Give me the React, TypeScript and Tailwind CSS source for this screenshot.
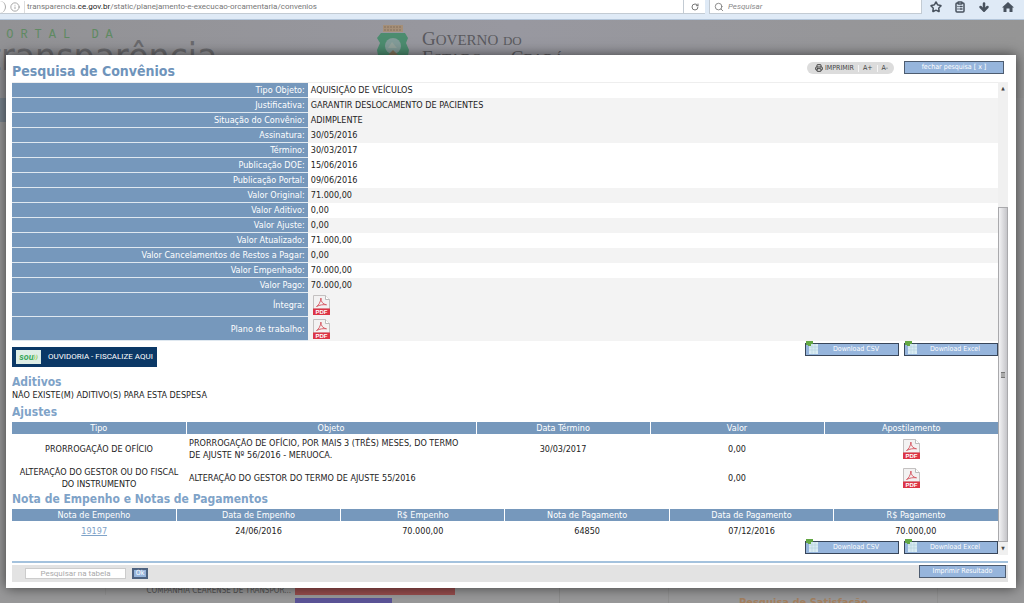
import { ArrowDown, ClipboardList, Info, Printer, RotateCw, Search, Star } from "lucide-react";

const details = [
  { label: "Tipo Objeto:", value: "AQUISIÇÃO DE VEÍCULOS", shaded: false },
  { label: "Justificativa:", value: "GARANTIR DESLOCAMENTO DE PACIENTES", shaded: true },
  { label: "Situação do Convênio:", value: "ADIMPLENTE", shaded: true },
  { label: "Assinatura:", value: "30/05/2016", shaded: true },
  { label: "Término:", value: "30/03/2017", shaded: false },
  { label: "Publicação DOE:", value: "15/06/2016", shaded: false },
  { label: "Publicação Portal:", value: "09/06/2016", shaded: false },
  { label: "Valor Original:", value: "71.000,00", shaded: true },
  { label: "Valor Aditivo:", value: "0,00", shaded: false },
  { label: "Valor Ajuste:", value: "0,00", shaded: true },
  { label: "Valor Atualizado:", value: "71.000,00", shaded: false },
  { label: "Valor Cancelamentos de Restos a Pagar:", value: "0,00", shaded: true },
  { label: "Valor Empenhado:", value: "70.000,00", shaded: false },
  { label: "Valor Pago:", value: "70.000,00", shaded: true },
];

const documents = ["Íntegra:", "Plano de trabalho:"];

const ajustes = [
  {
    tipo: "PRORROGAÇÃO DE OFÍCIO",
    objeto: "PRORROGAÇÃO DE OFÍCIO, POR MAIS 3 (TRÊS) MESES, DO TERMO DE AJUSTE Nº 56/2016 - MERUOCA.",
    termino: "30/03/2017",
    valor: "0,00",
  },
  {
    tipo: "ALTERAÇÃO DO GESTOR OU DO FISCAL DO INSTRUMENTO",
    objeto: "ALTERAÇÃO DO GESTOR DO TERMO DE AJUSTE 55/2016",
    termino: "",
    valor: "0,00",
  },
];

const notaColumns = [
  "Nota de Empenho",
  "Data de Empenho",
  "R$ Empenho",
  "Nota de Pagamento",
  "Data de Pagamento",
  "R$ Pagamento",
];

function PdfLink({ name }: { name: string }) {
  return (
    <a href="#" aria-label={name} className="inline-block align-middle">
      <svg viewBox="0 0 17 20" className="block h-5 w-[17px]">
        <path d="M.5.5h12l4 4V14H.5z" fill="#f3f2f2" stroke="#c4c1c1" />
        <path d="M12.5.5v4h4" fill="#fff" stroke="#bbb" />
        <path
          d="M3.500 11.500c2-1 4.200-4.500 4.400-8.500.1 4 2 6.200 5.600 6.800-3.500-.4-6.500 0-10 1.700z"
          fill="none"
          stroke="#d8606a"
          strokeWidth="1"
        />
        <path d="M0 13.500h17V20H0z" fill="#dc3545" />
        <text x="8.500" y="19" textAnchor="middle" fontSize="6" fontWeight="bold" fill="#fff" fontFamily="Liberation Sans">
          PDF
        </text>
      </svg>
    </a>
  );
}

function DownloadButton({ children }: { children: string }) {
  return (
    <button className="flex h-[13px] w-[94px] items-center border border-[#38465a] bg-[#96b5dc] text-[7px] leading-none text-white">
      <svg viewBox="0 0 12 13" className="-mt-1 h-[13px] w-3 shrink-0">
        <path d="M3 3h9v10H3z" fill="#d9ebf3" />
        <path d="M3 6h9M3 9h9M6 3v10M9 3v10" stroke="#b4d0de" strokeWidth=".6" />
        <path d="M0 0h7v3H5v2H2V4H0z" fill="#63a744" />
      </svg>
      <span className="flex-1 pr-1 text-center">{children}</span>
    </button>
  );
}

function Downloads() {
  return (
    <div className="flex justify-end gap-[5px]">
      <DownloadButton>Download CSV</DownloadButton>
      <DownloadButton>Download Excel</DownloadButton>
    </div>
  );
}

function BrowserBar() {
  return (
    <div className="flex h-5 items-start border-b border-[#b4c6da] bg-[#dfeaf6] font-['Roboto',sans-serif] text-[8px] text-[#777]">
      <div className="flex h-3.5 flex-1 items-center border-b border-[#c3cbd3] bg-white">
        <span className="h-3 w-1.5 rounded-r-full border-r border-[#aaa]" />
        <Info className="mx-1 h-2.5 w-2.5 text-[#999]" />
        <span className="border-l border-[#ddd] pl-0.5">
          transparencia.<span className="text-[#222]">ce.gov.br</span>
          /static/planejamento-e-execucao-orcamentaria/convenios
        </span>
      </div>
      <button
        aria-label="Recarregar"
        className="flex h-3.5 w-[22px] items-center justify-center border-b border-l border-[#c3cbd3] bg-white"
      >
        <RotateCw className="h-2 w-2" strokeWidth={3} />
      </button>
      <label className="ml-1 flex h-3.5 w-[213px] items-center border-x border-b border-[#c3cbd3] bg-white pl-1">
        <Search className="h-2.5 w-2.5 shrink-0" />
        <input
          aria-label="Pesquisar"
          placeholder="Pesquisar"
          className="w-full min-w-0 pl-1 italic outline-none placeholder:text-[#888]"
        />
      </label>
      <div className="flex h-3.5 w-[102px] items-center gap-3 pl-2 text-[#48525e]">
        <Star className="h-3 w-3 shrink-0" strokeWidth={3} />
        <ClipboardList className="h-3 w-3 shrink-0" strokeWidth={3} />
        <ArrowDown className="h-3 w-3 shrink-0" strokeWidth={5} />
        <svg viewBox="0 0 12 12" className="h-3 w-3 shrink-0" fill="currentColor">
          <path d="M6 1l6 5.500h-1.500V11h-3V7.500h-3V11h-3V6.500H0z" />
        </svg>
      </div>
    </div>
  );
}

function Portal() {
  return (
    <div className="flex flex-1 flex-col overflow-hidden bg-[#989899]">
      <div className="flex h-[78px] items-start bg-gradient-to-r from-[#929295] via-[#9898a0] to-[#959595]">
        <div className="w-[376px] whitespace-nowrap pt-2">
          <p className="-ml-2 font-['Liberation_Mono'] text-[12px] leading-[14px] tracking-[7px] text-[#5f8a62]">
            PORTAL DA
          </p>
          <p className="-ml-3 text-[37px] leading-8 text-[#6a6a6d]">transparência</p>
        </div>
        <svg viewBox="0 0 34 42" className="mt-1 h-[42px] w-[34px]">
          <path d="M7 1h20v7H7z" fill="#a58f78" />
          <path d="M8 3h18M8 6h18" stroke="#84715e" strokeDasharray="2 1" />
          <path d="M5 9h24l3 5-2 5 3 7-3 16H4L1 26l3-7-3-5z" fill="#4c8c6f" />
          <circle cx="17" cy="22" r="8" fill="#829b98" />
          <path d="M9 40l4-10 4-4 5 5 3 9z" fill="#82735a" />
          <path d="M12 24l4-6 5 6z" fill="#93a39c" />
        </svg>
        <p className="ml-3 pt-2.5 font-['Liberation_Serif'] text-[19px] leading-[17px] text-[#5a5a5e]">
          G<span className="text-[15px]">OVERNO</span> <span className="text-[13px]">DO</span>
          <br />E<span className="text-[15px]">STADO</span> <span className="text-[13px]">DO</span> C
          <span className="text-[15px]">EARÁ</span>
        </p>
      </div>
      <div className="h-6 w-4 bg-[#78838e]" />
      <div className="mt-auto flex h-[17px] items-start text-[8px] leading-[9px]">
        <div className="ml-[105px] w-[190px] border-l border-[#909090] pr-1 text-right text-[#555]">
          COMPANHIA CEARENSE DE TRANSPOR...
        </div>
        <div className="flex w-[265px] flex-col gap-[3px] border-r border-[#8c8c8c]">
          <div className="h-[9px] w-[160px] bg-[#984d4d]" />
          <div className="h-1.5 w-[97px] bg-[#5b5396]" />
        </div>
        <p className="ml-[108px] w-[270px] border-x border-[#909090] pl-[70px] pt-3 text-[11px] font-bold text-[#a3805f]">
          Pesquisa de Satisfação
        </p>
      </div>
    </div>
  );
}

export default function App() {
  return (
    <div className="relative flex h-screen flex-col overflow-hidden bg-[#989899] font-['DejaVu_Sans_Condensed','DejaVu_Sans',sans-serif] text-[9px] leading-3 text-[#222]">
      <BrowserBar />
      <Portal />

      <div
        role="dialog"
        aria-labelledby="titulo"
        className="absolute bottom-[15px] left-1.5 right-2 top-[55px] flex flex-col bg-white pb-1.5 pl-1.5 pr-2 shadow-[0_0_12px_rgba(0,0,0,0.6)]"
      >
        <header className="flex h-[27px] shrink-0 items-start justify-between">
          <h1 id="titulo" className="pt-2 text-[14px] font-bold leading-4 text-[#6f94bb]">
            Pesquisa de Convênios
          </h1>
          <div className="flex items-start gap-2.5 pr-1 pt-1.5">
            <div className="mt-px flex h-3 items-center rounded-full bg-[#dcdcdc] text-[7px] leading-none text-[#444]">
              <button className="flex items-center gap-0.5 pl-2 pr-1">
                <Printer className="h-2 w-2" strokeWidth={3} />
                IMPRIMIR
              </button>
              <button className="border-l border-[#f5f5f5] px-1">A+</button>
              <button className="border-l border-[#f5f5f5] pl-1 pr-1.5">A-</button>
            </div>
            <button className="h-[13px] w-[100px] border border-[#4d5c70] bg-[#96b5dc] text-[7px] leading-[11px] text-white">
              fechar pesquisa [ x ]
            </button>
          </div>
        </header>

        <div className="flex min-h-0 flex-1">
          <main className="min-w-0 flex-1 overflow-hidden">
            <table className="w-full border-collapse border-t border-[#eee]">
              <tbody>
                {details.map((row) => (
                  <tr key={row.label} className={row.shaded ? "bg-[#f3f3f3]" : "bg-white"}>
                    <th className="h-[15px] w-[30%] border-b border-[#dfe8f0] bg-[#7698bc] p-0 pr-[3px] text-right font-normal text-white">
                      {row.label}
                    </th>
                    <td className="p-0 pl-[3px]">{row.value}</td>
                  </tr>
                ))}
                {documents.map((label) => (
                  <tr key={label} className="bg-[#f3f3f3]">
                    <th className="h-6 border-b border-[#dfe8f0] bg-[#7698bc] p-0 pr-[3px] text-right font-normal text-white">
                      {label}
                    </th>
                    <td className="p-0 pl-[5px]">
                      <PdfLink name={label} />
                    </td>
                  </tr>
                ))}
              </tbody>
            </table>

            <div className="flex items-start justify-between pt-0.5">
              <a
                href="#"
                className="mt-1 flex h-5 w-[145px] items-center whitespace-nowrap bg-[#0b3866] pl-1 font-['Roboto',sans-serif] text-[8px] text-white"
              >
                <span className="mr-[7px] flex h-3.5 w-[25px] shrink-0 items-center justify-center bg-[#dfeee6] text-[9px] font-bold italic text-[#3ca95c]">
                  sou<span className="text-[6px] text-[#8cc63f]">))</span>
                </span>
                OUVIDORIA - FISCALIZE AQUI
              </a>
              <Downloads />
            </div>

            <h2 className="mt-2 text-[12px] font-bold leading-[14px] text-[#7fa3c8]">Aditivos</h2>
            <p>NÃO EXISTE(M) ADITIVO(S) PARA ESTA DESPESA</p>

            <h2 className="mt-1 text-[12px] font-bold leading-[14px] text-[#7fa3c8]">Ajustes</h2>
            <table className="mt-[3px] w-full table-fixed border-collapse text-center">
              <thead>
                <tr className="bg-[#7698bc] text-white">
                  <th className="h-3 w-[174px] border-r border-white p-0 font-normal">Tipo</th>
                  <th className="w-[290px] border-r border-white p-0 font-normal">Objeto</th>
                  <th className="border-r border-white p-0 font-normal">Data Término</th>
                  <th className="border-r border-white p-0 font-normal">Valor</th>
                  <th className="p-0 font-normal">Apostilamento</th>
                </tr>
              </thead>
              <tbody>
                {ajustes.map((item) => (
                  <tr key={item.tipo}>
                    <td className="h-[29px] p-0 px-1">{item.tipo}</td>
                    <td className="p-0 pl-[3px] pr-1 text-left">{item.objeto}</td>
                    <td className="p-0">{item.termino}</td>
                    <td className="p-0">{item.valor}</td>
                    <td className="p-0">
                      <PdfLink name="Apostilamento" />
                    </td>
                  </tr>
                ))}
              </tbody>
            </table>

            <h2 className="text-[12px] font-bold leading-[14px] text-[#7fa3c8]">Nota de Empenho e Notas de Pagamentos</h2>
            <table className="mt-[3px] w-full table-fixed border-collapse text-center">
              <thead>
                <tr className="bg-[#7698bc] text-white">
                  {notaColumns.map((column) => (
                    <th key={column} className="h-3 border-r border-white p-0 font-normal last:border-r-0">
                      {column}
                    </th>
                  ))}
                </tr>
              </thead>
              <tbody>
                <tr>
                  <td className="h-5 p-0">
                    <a href="#" className="text-[#7fa3c8] underline">
                      19197
                    </a>
                  </td>
                  <td className="p-0">24/06/2016</td>
                  <td className="p-0">70.000,00</td>
                  <td className="p-0">64850</td>
                  <td className="p-0">07/12/2016</td>
                  <td className="p-0">70.000,00</td>
                </tr>
              </tbody>
            </table>
            <Downloads />
          </main>

          <div className="flex w-2.5 shrink-0 flex-col items-center bg-[#f0f0f0] text-[5px] leading-none text-[#444]">
            <span className="py-1">▲</span>
            <div className="mt-[112px] flex flex-1 items-center justify-center self-stretch border border-[#a9a9ac] bg-gradient-to-r from-[#f2f2f4] to-[#c5c5c9]">
              <span className="h-1.5 w-1 border-y border-[#777] bg-[#aaa]" />
            </div>
            <span className="py-1">▼</span>
          </div>
        </div>

        <footer className="mt-1.5 shrink-0 border-t-2 border-[#a4c2dd] pt-0.5">
          <div className="flex h-[17px] items-center bg-[#e3e3e3] pl-[13px]">
            <input
              aria-label="Pesquisar na tabela"
              placeholder="Pesquisar na tabela"
              className="h-[11px] w-[101px] border border-[#ccc] bg-white text-center font-['Roboto',sans-serif] text-[8px] placeholder:text-[#aaa]"
            />
            <button className="ml-1.5 h-[11px] w-4 border-2 border-[#4d6280] bg-[#96b5dc] text-[7px] leading-[7px] text-white">
              Ok
            </button>
            <button className="ml-auto mr-0.5 h-[13px] w-[87px] self-start border border-[#4d5c70] bg-[#96b5dc] text-[7px] leading-[11px] text-white">
              Imprimir Resultado
            </button>
          </div>
        </footer>
      </div>
    </div>
  );
}
